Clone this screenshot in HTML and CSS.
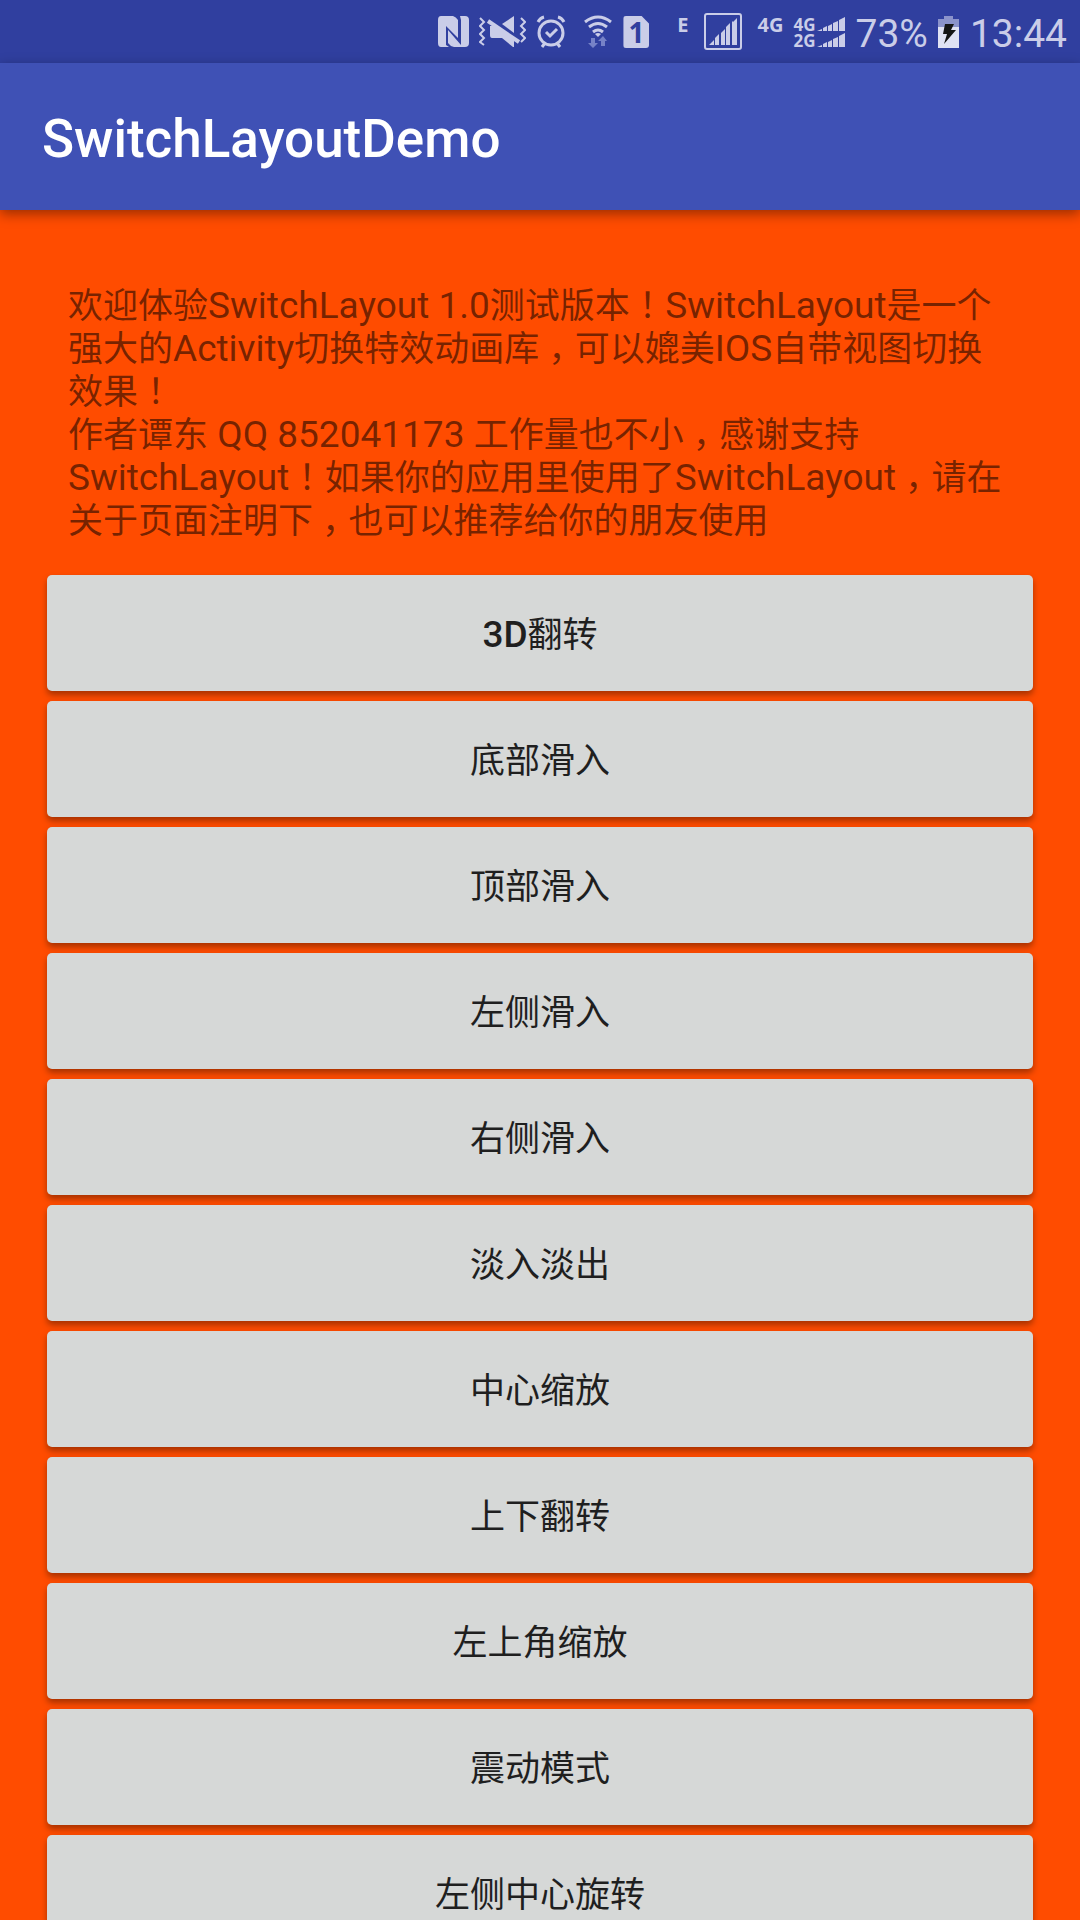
FILE: index.html
```html
<!DOCTYPE html>
<html lang="zh-CN">
<head>
<meta charset="utf-8">
<meta name="viewport" content="width=device-width, initial-scale=1">
<title>SwitchLayoutDemo</title>
<link rel="stylesheet" href="styles.css">
</head>
<body>
<div class="app">
  <div class="status-bar">
    <svg class="icon" width="32" height="34" viewBox="0 0 32 34" aria-label="NFC"><path fill="currentColor" d="M4 1h12q3 1 5 4v18L9 11v19l3 2H4q-3 0-3-4V5q0-4 3-4zM23 1h5q4 0 4 4v23q0 4-4 4H17q-4-1-6-4V15l13 15V5z"/></svg>
    <svg class="icon" width="47" height="34" viewBox="0 0 47 34" aria-label="静音振动"><g fill="currentColor"><path d="M35 1v17L23 9z"/><path d="M11 11h4l20 13v8h-1L23 23H13q-2 0-2-3z"/></g><g fill="none" stroke="currentColor"><path stroke-width="4" d="M9 6l31 21"/><path stroke-width="2" d="M1 3l4 4-4 4 4 4-4 4 4 4-4 4 4 3M42 3l4 4-4 4 4 4-4 4 4 4-4 4"/></g></svg>
    <svg class="icon" width="30" height="34" viewBox="0 0 30 34" aria-label="闹钟"><g fill="none" stroke="currentColor" stroke-width="3"><circle cx="15" cy="18" r="12"/><path d="M2 7q2-4 6-5M28 7q-2-4-6-5M9 28l-3 4M21 28l3 4"/><path d="M10 17l4 4 7-7"/></g></svg>
    <svg class="icon" width="37" height="34" viewBox="0 0 37 34" aria-label="无线网络"><g fill="none" stroke="currentColor" stroke-width="3"><path d="M9 7q13-10 26 0M13 12q9-7 18 0M17 17q5-4 10 0"/></g><path fill="currentColor" d="M19 19q3-2 6 0l-3 3z"/><path fill="#7682c7" d="M15 23h4v5h3l-5 5-5-5h3zM25 31v-5h-3l5-5 4 5h-2v5z"/></svg>
    <span class="sim">1</span>
    <span class="net net-edge">E</span>
    <svg class="icon" width="38" height="38" viewBox="0 0 38 38" aria-label="信号"><rect x="1" y="1" width="36" height="35" rx="2" fill="none" stroke="currentColor" stroke-width="2"/><path fill="currentColor" d="M5 32l5-5v5zM11 32v-7l4-4v11zM17 32V20l4-4v16zM22 32V14l4-4v22zM28 32V9l1-1v24zM29 32V9l4-4v27z"/></svg>
    <span class="net net-4g">4G</span>
    <span class="dual">
      <span class="dual-row">4G<svg width="28" height="15" viewBox="0 0 28 15"><path fill="currentColor" d="M0 14l5-2v2zM6 14v-3l4-2v5zM11 14V9l4-2v7zM16 14V6l5-2v10zM22 14V3l6-3v14z"/></svg></span>
      <span class="dual-row">2G<svg width="28" height="15" viewBox="0 0 28 15"><path fill="currentColor" d="M0 14l5-2v2zM6 14v-3l4-2v5zM11 14V9l4-2v7zM16 14V6l5-2v10zM22 14V3l6-3v14z"/></svg></span>
    </span>
    <span class="reading">73%</span>
    <svg class="icon" width="22" height="34" viewBox="0 0 22 34" aria-label="充电中"><path fill="#8b93cb" d="M6 1h9v3h6v8H0V4h6z"/><path fill="#e0e2f3" d="M0 12h21v21H0z"/><path fill="#151515" d="M7 9h9l-3 6h5L6 29l3-10H5z"/></svg>
    <time class="reading">13:44</time>
  </div>
  <header class="app-bar"><h1>SwitchLayoutDemo</h1></header>
  <main class="content">
    <p class="intro">欢迎体验<span class="latin">SwitchLayout 1.0</span>测试版本<span class="mark">！</span><span class="latin">SwitchLayout</span>是一个强大的<span class="latin">Activity</span>切换特效动画库<span class="mark">，</span>可以媲美<span class="latin">IOS</span>自带视图切换效果<span class="mark">！</span><br>作者谭东<span class="latin"> QQ 852041173 </span>工作量也不小<span class="mark">，</span>感谢支持<span class="latin">SwitchLayout</span><span class="mark">！</span>如果你的应用里使用了<span class="latin">SwitchLayout</span><span class="mark">，</span>请在关于页面注明下<span class="mark">，</span>也可以推荐给你的朋友使用</p>
    <div class="effects">
      <button type="button"><span class="latin">3D</span>翻转</button>
      <button type="button">底部滑入</button>
      <button type="button">顶部滑入</button>
      <button type="button">左侧滑入</button>
      <button type="button">右侧滑入</button>
      <button type="button">淡入淡出</button>
      <button type="button">中心缩放</button>
      <button type="button">上下翻转</button>
      <button type="button">左上角缩放</button>
      <button type="button">震动模式</button>
      <button type="button">左侧中心旋转</button>
    </div>
  </main>
</div>
</body>
</html>
```
FILE: styles.css
```css
* { box-sizing: border-box; }

body {
  margin: 0;
  background: #ff4c00;
  font-family: Roboto, "Noto Sans CJK SC", sans-serif;
}

.app {
  display: flex;
  flex-direction: column;
  height: 100vh;
}

.status-bar {
  display: flex;
  flex: none;
  align-items: center;
  justify-content: flex-end;
  gap: 10px;
  height: 63px;
  padding: 1px 13px 0 0;
  background: #303f9f;
  color: #cacde8;
}

.icon { flex: none; }

.sim {
  width: 26px;
  height: 32px;
  border-radius: 3px;
  background: currentColor;
  clip-path: polygon(0 0, 70% 0, 100% 25%, 100% 100%, 0 100%);
  font: bold 28px/32px "Noto Sans", sans-serif;
  text-align: center;
}

.sim::first-letter { color: #303f9f; }

.net {
  padding-bottom: 14px;
  font: bold 20px/20px "Noto Sans", sans-serif;
  text-align: right;
}

.net-edge { width: 35px; padding-right: 6px; }
.net-4g { width: 31px; }

.dual {
  display: grid;
  gap: 1px;
  font: bold 17px/15px "Noto Sans", sans-serif;
}

.dual-row { display: flex; gap: 2px; }

.reading {
  font-size: 39px;
  line-height: 44px;
  padding-top: 4px;
}

.app-bar {
  position: relative;
  z-index: 1;
  display: flex;
  flex: none;
  align-items: center;
  height: 147px;
  padding: 4px 42px 0;
  background: #3f51b5;
  box-shadow: 0 4px 12px rgba(0, 0, 0, 0.4);
}

h1 {
  margin: 0;
  color: #fff;
  font-size: 53px;
  font-weight: 500;
  line-height: 60px;
}

.content {
  flex: 1;
  min-height: 0;
  overflow-y: auto;
  padding: 75px 47px 0;
  scrollbar-width: none;
}

.intro {
  margin: 0 21px 32px;
  color: rgba(0, 0, 0, 0.54);
  font-size: 35px;
  line-height: 43px;
}

.latin { font-size: 37px; line-height: 1; }

/* full-width marks sit in the middle of their cell */
.mark {
  padding: 0 9px;
  font-family: "Noto Sans CJK SC", sans-serif;
  font-feature-settings: "halt";
  line-height: 1;
}

.effects { display: grid; gap: 10px; }

.effects button {
  height: 116px;
  padding: 4px 0 0;
  border: 0;
  border-radius: 5px;
  background: #d6d8d7;
  box-shadow: 0 4px 6px rgba(0, 0, 0, 0.35);
  color: #1f1f1f;
  font-family: inherit;
  font-size: 35px;
  line-height: 43px;
}

.effects .latin { font-weight: 500; }
```
